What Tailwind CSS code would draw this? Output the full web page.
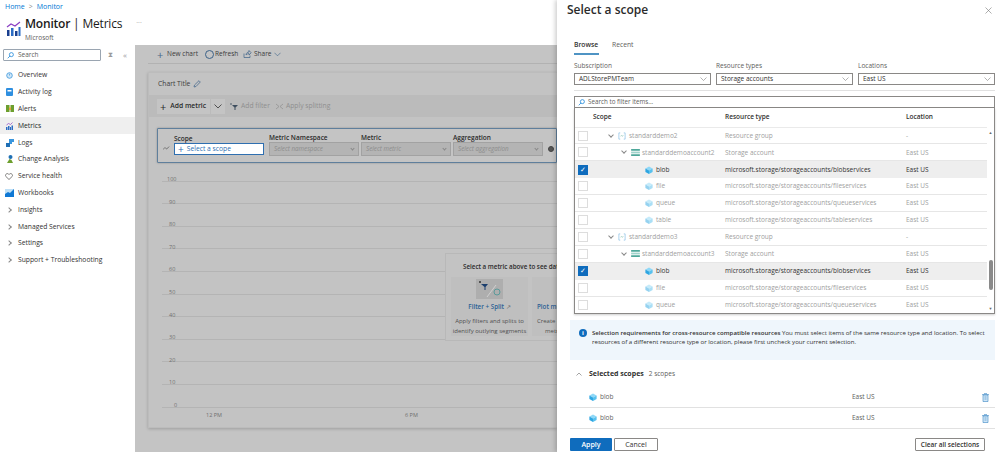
<!DOCTYPE html>
<html lang="en">
<head>
  <meta charset="UTF-8">
  <title>Monitor | Metrics</title>
  <script src="https://cdn.jsdelivr.net/npm/@tailwindcss/browser@4"></script>
</head>
<body class="bg-white overflow-hidden">
<svg class="hidden">
  <symbol id="cube" viewBox="0 0 10 10">
    <polygon points="5,0.5 9.5,3 5,5.5 0.5,3" fill="#8fd8f7"/>
    <polygon points="0.5,3 5,5.5 5,10 0.5,7.5" fill="#2ea6e2"/>
    <polygon points="9.5,3 5,5.5 5,10 9.5,7.5" fill="#58c1ee"/>
  </symbol>
  <symbol id="group" viewBox="0 0 9 9">
    <path d="M2.500 1H1v7h1.500M6.500 1H8v7H6.500" fill="none" stroke="#5aa7dd" stroke-width=".8"/>
    <path d="M3 5l1-1.500L5 5l1-1.500" fill="none" stroke="#6fb5a0" stroke-width=".7"/>
  </symbol>
  <symbol id="storage" viewBox="0 0 10 8">
    <rect width="10" height="2" fill="#4fa89a"/><rect y="3" width="10" height="2" fill="#9fd3cb"/><rect y="6" width="10" height="2" fill="#4fa89a"/>
  </symbol>
  <symbol id="trash" viewBox="0 0 7 9">
    <path d="M1 2h5v6.500H1zM0 1.500h7M2.500 1V.3h2V1M2.500 4h2M2.500 6h2" fill="#cfe6f7" stroke="#3a86c4" stroke-width=".6"/>
  </symbol>
  <symbol id="chev" viewBox="0 0 7 4">
    <path d="M.5.5l3 3 3-3" fill="none" stroke="#666" stroke-width=".5"/>
  </symbol>
</svg>
<div class="w-[998px] h-[452px] flex overflow-hidden font-['Open_Sans',sans-serif] text-[#323130]">

  <!-- left: portal behind the blade -->
  <div class="w-[557px] shrink-0 flex flex-col">
    <div class="h-[45px] shrink-0 pl-[5px] pt-[1px]">
      <div class="text-[7px] leading-[11px] text-[#0078d4] flex gap-[4px]"><span>Home</span><span class="text-[#888]">&gt;</span><span>Monitor</span></div>
      <div class="flex items-start mt-[3px]">
        <svg class="w-[15px] h-[16px] mt-[6px] ml-[1px]" viewBox="0 0 15 16">
          <path d="M1 6l4-3 4 2 5-4" fill="none" stroke="#8a3fc4" stroke-width="1.200"/>
          <rect x="1" y="9" width="2.500" height="6" fill="#1a3f8f"/><rect x="5" y="7" width="2.500" height="8" fill="#2b6cc4"/><rect x="9" y="10" width="2.500" height="5" fill="#1a3f8f"/><rect x="12.500" y="6" width="2" height="9" fill="#2b6cc4"/>
        </svg>
        <div class="ml-[4px]">
          <div class="text-[12px] leading-[17px] font-semibold text-[#1b1a19] whitespace-nowrap tracking-[-0.2px]">Monitor<span class="font-normal"> | Metrics</span></div>
          <div class="text-[6.5px] leading-[9px] mt-[1px] text-[#605e5c]">Microsoft</div>
        </div>
        <span class="ml-[14px] mt-[3px] text-[7px] text-[#999] leading-[10px]">···</span>
      </div>
    </div>

    <div class="flex flex-1 min-h-0">
      <!-- sidebar -->
      <div class="w-[135px] shrink-0">
        <div class="flex items-center h-[20px] pl-[3px]">
          <div class="w-[98px] h-[12px] border border-[#9aa5b1] rounded-[1px] flex items-center pl-[3px] gap-[4px] text-[6.5px] text-[#605e5c]">
            <svg class="w-[7px] h-[7px]" viewBox="0 0 8 8"><circle cx="5" cy="3" r="2.300" fill="none" stroke="#0078d4" stroke-width=".8"/><path d="M3.400 4.600L.8 7.200" stroke="#0078d4" stroke-width=".8"/></svg>
            Search
          </div>
          <span class="ml-[7px] text-[7px] text-[#999]">⧗</span>
          <span class="ml-[10px] text-[8px] text-[#999]">«</span>
        </div>
        <div class="text-[6.75px] text-[#323130] mt-[2px]">
          <div class="h-[16.8px] flex items-center pl-[6px] gap-[5px]"><svg class="w-[7px] h-[7px]" viewBox="0 0 8 8"><circle cx="4" cy="4" r="3.200" fill="#cfe6f7" stroke="#3a96dd" stroke-width=".9"/><path d="M4 4V2" stroke="#3a96dd" stroke-width=".8"/></svg><span>Overview</span></div>
          <div class="h-[16.8px] flex items-center pl-[6px] gap-[5px]"><svg class="w-[7px] h-[8px]" viewBox="0 0 7 8"><rect width="7" height="8" rx="1" fill="#2f8fe0"/><rect x="1.500" y="2" width="4" height="1.500" fill="#fff"/></svg><span>Activity log</span></div>
          <div class="h-[16.8px] flex items-center pl-[6px] gap-[4px]"><svg class="w-[8px] h-[7px]" viewBox="0 0 8 7"><path d="M0 0h3.500v7H0zM4.500 0H8v7H4.500z" fill="#6d9f2e"/><path d="M3 2.500h2V5H3z" fill="#e8a33d"/></svg><span>Alerts</span></div>
          <div class="h-[16.8px] flex items-center pl-[6px] gap-[5px] bg-[#efefef] text-[#201f1e]"><svg class="w-[7px] h-[8px]" viewBox="0 0 7 8"><path d="M.5 3l2-1.500 2 1L6.500.5" fill="none" stroke="#8a3fc4" stroke-width=".7"/><path d="M0 5h1.500v3H0zM2 4h1.500v4H2zM4 5h1v3H4zM5.500 3.500H7V8H5.500z" fill="#2b6cc4"/></svg><span>Metrics</span></div>
          <div class="h-[16.8px] flex items-center pl-[6px] gap-[4px]"><svg class="w-[8px] h-[8px]" viewBox="0 0 8 8"><path d="M3 0h5v3H6v2H3z" fill="#3a96dd"/><path d="M0 4h4v4H0z" fill="#1f6fb5"/></svg><span>Logs</span></div>
          <div class="h-[16.8px] flex items-center pl-[6px] gap-[4px]"><svg class="w-[8px] h-[8px]" viewBox="0 0 8 8"><circle cx="4.500" cy="2" r="2" fill="#1f6fb5"/><path d="M1 8l2.500-4 2 1L7 8z" fill="#6d9f2e"/></svg><span>Change Analysis</span></div>
          <div class="h-[16.8px] flex items-center pl-[5px] gap-[5px]"><svg class="w-[8px] h-[7px]" viewBox="0 0 8 7"><path d="M4 6.500L.7 3.300C-.5 1.500 2.700-.7 4 1.500 5.300-.7 8.500 1.500 7.300 3.300z" fill="none" stroke="#605e5c" stroke-width=".8"/></svg><span>Service health</span></div>
          <div class="h-[16.8px] flex items-center pl-[5px] gap-[4px]"><svg class="w-[9px] h-[8px]" viewBox="0 0 9 8"><rect width="9" height="8" fill="#bfe0f7"/><path d="M0 8V5l3-2 2 1 4-4v8z" fill="#0f78d4"/></svg><span>Workbooks</span></div>
          <div class="h-[16.8px] flex items-center pl-[7px] gap-[7px]"><span class="w-[4px] h-[4px] border-t border-r border-[#888] rotate-45"></span><span>Insights</span></div>
          <div class="h-[16.8px] flex items-center pl-[7px] gap-[7px]"><span class="w-[4px] h-[4px] border-t border-r border-[#888] rotate-45"></span><span>Managed Services</span></div>
          <div class="h-[16.8px] flex items-center pl-[7px] gap-[7px]"><span class="w-[4px] h-[4px] border-t border-r border-[#888] rotate-45"></span><span>Settings</span></div>
          <div class="h-[16.8px] flex items-center pl-[7px] gap-[7px]"><span class="w-[4px] h-[4px] border-t border-r border-[#888] rotate-45"></span><span class="whitespace-nowrap">Support + Troubleshooting</span></div>
        </div>
      </div>

      <!-- dimmed metrics page -->
      <div class="flex-1 min-w-0 bg-[#c4c4c4] flex flex-col pl-[13px] text-[#3b3b3b]">
        <div class="h-[19px] shrink-0 border-b border-[#b2b2b2] flex items-center pl-[9px] text-[6.5px] whitespace-nowrap">
          <span class="text-[11px] leading-none text-[#4a6a8a] w-[10px]">+</span><span class="w-[31px]">New chart</span>
          <span class="ml-[7px] w-[9px] h-[9px] rounded-full border border-[#3c6288]"></span><span class="ml-[1px] w-[23px]">Refresh</span>
          <svg class="w-[9px] h-[8px] ml-[5px]" viewBox="0 0 8 8"><path d="M.5 3.500v4h6v-2M2.500 5c0-2 1.500-3 3-3V.5L7.700 2.800 5.500 5V3.500c-1 0-2 .5-3 1.500z" fill="none" stroke="#3c6288" stroke-width=".7"/></svg><span class="ml-[2px] w-[18px]">Share</span>
          <svg class="w-[7px] h-[5px] ml-[2px]" viewBox="0 0 8 5"><path d="M.5.5L4 4 7.500.5" fill="none" stroke="#3c6288" stroke-width=".7"/></svg>
        </div>
        <div class="flex-1 mt-[8px] mb-[24px] bg-[#c3c3c3] border border-r-0 border-[#bcbcbc] shadow-[0_1px_3px_rgba(0,0,0,.2)] relative min-h-0">
          <div class="h-[22px] flex items-center pl-[9px] gap-[3px] text-[6.75px]">Chart Title
            <svg class="w-[8px] h-[8px]" viewBox="0 0 8 8"><path d="M1 7l.5-2L6 .7 7.300 2 3 6.500z" fill="none" stroke="#3c6288" stroke-width=".7"/></svg>
          </div>
          <div class="h-[22px] bg-[#bbbbbb] flex items-center pl-[8px] text-[6.75px]">
            <div class="h-[15px] w-[53px] bg-[#c4c4c4] flex items-center font-semibold text-[#2b2b2b] whitespace-nowrap">
              <span class="text-[11px] font-normal leading-none pl-[3px] pr-[4px]">+</span>Add metric
            </div>
            <div class="h-[15px] w-[14px] ml-[1px] bg-[#c4c4c4] flex items-center justify-center"><svg class="w-[8px] h-[5px]" viewBox="0 0 8 5"><path d="M.5.5L4 4 7.500.5" fill="none" stroke="#333" stroke-width=".8"/></svg></div>
            <span class="ml-[5px] text-[#8f8f8f] flex items-center gap-[3px] whitespace-nowrap"><svg class="w-[8px] h-[7px]" viewBox="0 0 8 7"><path d="M2 2h6L5.500 4.500V7h-1V4.500z" fill="#3f4f5f"/><circle cx="1" cy="1" r=".8" fill="#3f4f5f"/></svg>Add filter</span>
            <span class="ml-[6px] text-[#8f8f8f] flex items-center gap-[3px] whitespace-nowrap"><svg class="w-[7px] h-[7px]" viewBox="0 0 7 7"><path d="M0 1l3 2.500L0 6M7 1L4 3.500 7 6" fill="none" stroke="#8f8f8f" stroke-width=".7"/></svg>Apply splitting</span>
          </div>
          <!-- metric picker -->
          <div class="mt-[11px] ml-[8px] h-[35px] border border-[#5f7f9c] rounded-[1px] shadow-[0_0_2px_#888] flex items-end pb-[6px] pl-[5px] bg-[#c4c4c4]">
            <svg class="w-[7px] h-[4px] mb-[6px] mr-[4px]" viewBox="0 0 7 4"><path d="M0 3.500l2-2 1.500 1.500L6.500.5" fill="none" stroke="#333" stroke-dasharray="1 .5" stroke-width=".8"/></svg>
            <div class="w-[90px] mr-[5px]">
              <div class="text-[6.5px] leading-[9px] font-semibold text-[#2b2b2b]">Scope</div>
              <div class="h-[12px] mb-[1px] bg-white border border-[#2f6fb0] flex items-center pl-[3px] gap-[3px] text-[6.75px] text-[#2b6fb3]"><span class="text-[10px] leading-none">+</span>Select a scope</div>
            </div>
            <div class="w-[90px] mr-[2px]">
              <div class="text-[6.5px] leading-[9px] font-semibold text-[#2b2b2b]">Metric Namespace</div>
              <div class="h-[14px] bg-[#b4b4b4] border border-[#a2a2a2] flex items-center justify-between px-[4px] text-[6.25px] italic text-[#8c8c8c]">Select namespace<span class="w-[3px] h-[3px] border-b border-r border-[#888] rotate-45 -mt-[2px]"></span></div>
            </div>
            <div class="w-[90px] mr-[2px]">
              <div class="text-[6.5px] leading-[9px] font-semibold text-[#2b2b2b]">Metric</div>
              <div class="h-[14px] bg-[#b4b4b4] border border-[#a2a2a2] flex items-center justify-between px-[4px] text-[6.25px] italic text-[#8c8c8c]">Select metric<span class="w-[3px] h-[3px] border-b border-r border-[#888] rotate-45 -mt-[2px]"></span></div>
            </div>
            <div class="w-[90px] mr-[5px]">
              <div class="text-[6.5px] leading-[9px] font-semibold text-[#2b2b2b]">Aggregation</div>
              <div class="h-[14px] bg-[#b4b4b4] border border-[#a2a2a2] flex items-center justify-between px-[4px] text-[6.25px] italic text-[#8c8c8c]">Select aggregation<span class="w-[3px] h-[3px] border-b border-r border-[#888] rotate-45 -mt-[2px]"></span></div>
            </div>
            <span class="w-[6px] h-[6px] mb-[4px] rounded-full bg-[#555] border border-[#444]"></span>
          </div>
          <!-- chart grid -->
          <div class="ml-[13px] text-[5.5px] text-[#6f6f6f]">
            <div class="h-[18.7px] border-b border-[#b4b4b4] pl-[5px] leading-[7px] pt-[13px]">100</div>
            <div class="h-[22.6px] border-b border-[#b4b4b4] pl-[7px] leading-[7px] pt-[17px]">90</div>
            <div class="h-[22.6px] border-b border-[#b4b4b4] pl-[7px] leading-[7px] pt-[17px]">80</div>
            <div class="h-[22.6px] border-b border-[#b4b4b4] pl-[7px] leading-[7px] pt-[17px]">70</div>
            <div class="h-[22.6px] border-b border-[#b4b4b4] pl-[7px] leading-[7px] pt-[17px]">60</div>
            <div class="h-[22.6px] border-b border-[#b4b4b4] pl-[7px] leading-[7px] pt-[17px]">50</div>
            <div class="h-[22.6px] border-b border-[#b4b4b4] pl-[7px] leading-[7px] pt-[17px]">40</div>
            <div class="h-[22.6px] border-b border-[#b4b4b4] pl-[7px] leading-[7px] pt-[17px]">30</div>
            <div class="h-[22.6px] border-b border-[#b4b4b4] pl-[7px] leading-[7px] pt-[17px]">20</div>
            <div class="h-[22.6px] border-b border-[#b4b4b4] pl-[7px] leading-[7px] pt-[17px]">10</div>
            <div class="h-[22.6px] border-b border-[#b4b4b4] pl-[12px] leading-[7px] pt-[17px]">0</div>
            <div class="flex pl-[44px] pt-[3px] leading-[8px]"><span class="w-[199px]">12 PM</span><span>6 PM</span></div>
          </div>
          <!-- empty state card over the chart -->
          <div class="absolute left-[296px] top-[180px] w-[112px] h-[88px] bg-[#c3c3c3] border border-r-0 border-[#b8b8b8] pt-[8px] pl-[5px] overflow-hidden">
            <div class="text-[6.25px] font-semibold leading-[9px] whitespace-nowrap pl-[12px] text-[#2b2b2b]">Select a metric above to see data</div>
            <div class="flex gap-[4px] mt-[6px]">
              <div class="w-[77px] h-[59px] shrink-0 bg-[#bfbfbf] text-center">
                <svg class="w-[27px] h-[20px] mx-auto mt-[2px] bg-[#aeaeae]" viewBox="0 0 27 20"><path d="M5 5h7L9.500 8v3h-1V8z" fill="#1c3f6e"/><circle cx="4" cy="3" r="1" fill="#333"/><path d="M11 18L20 6" stroke="#d0d0d0"/><circle cx="21" cy="13" r="3" fill="none" stroke="#5a9a9a"/></svg>
                <div class="text-[6.25px] font-semibold leading-[9px] mt-[3px] text-[#2b5f94]">Filter + Split <span class="font-normal text-[#666]">↗</span></div>
                <div class="text-[6px] leading-[10px] mt-[5px] text-[#4f4f4f] whitespace-nowrap">Apply filters and splits to<br>identify outlying segments</div>
              </div>
              <div class="w-[78px] h-[59px] shrink-0 bg-[#bfbfbf] pt-[25px] pl-[5px] whitespace-nowrap">
                <div class="text-[6.25px] font-semibold leading-[9px] text-[#2b5f94]">Plot multiple</div>
                <div class="text-[6px] leading-[10px] mt-[5px] text-[#4f4f4f]">Create charts<br><span class="pl-[8px]">metrics</span></div>
              </div>
            </div>
          </div>
        </div>
      </div>
    </div>
  </div>

  <!-- right: Select a scope blade -->
  <div class="w-[441px] shrink-0 flex flex-col shadow-[-2px_0_4px_rgba(0,0,0,.18)] z-10 bg-white pl-[13px] pr-[3px]">
    <div class="h-[19px] flex justify-between items-center pr-[3px] pt-[1px]">
      <div class="text-[12px] font-semibold text-[#2b2b2b] -ml-[3px]">Select a scope</div>
      <svg class="w-[7px] h-[7px]" viewBox="0 0 7 7"><path d="M.5.5l6 6M6.500.5l-6 6" stroke="#777" stroke-width=".6"/></svg>
    </div>
    <div class="flex gap-[13px] text-[6.75px] leading-[14px] mt-[19px] h-[17px] pl-[4px] text-[#605e5c]">
      <div class="border-b-2 border-[#4f94c4] h-[17px] w-[25px] text-[#323130] font-semibold">Browse</div>
      <div>Recent</div>
    </div>
    <div class="flex gap-[5px] mt-[6px] ml-[4px] text-[6.5px] text-[#605e5c]">
      <div class="w-[137px]"><div class="leading-[10px]">Subscription</div><div class="mt-[2px] h-[12px] border border-[#8a8886] flex items-center justify-between pl-[4px] pr-[3px] text-[#323130]">ADLStorePMTeam<svg class="w-[7px] h-[4px]"><use href="#chev"/></svg></div></div>
      <div class="w-[137px]"><div class="leading-[10px]">Resource types</div><div class="mt-[2px] h-[12px] border border-[#8a8886] flex items-center justify-between pl-[4px] pr-[3px] text-[#323130]">Storage accounts<svg class="w-[7px] h-[4px]"><use href="#chev"/></svg></div></div>
      <div class="w-[137px]"><div class="leading-[10px]">Locations</div><div class="mt-[2px] h-[12px] border border-[#8a8886] flex items-center justify-between pl-[4px] pr-[3px] text-[#323130]">East US<svg class="w-[7px] h-[4px]"><use href="#chev"/></svg></div></div>
    </div>
    <div class="mt-[5px] ml-[4px] border-t border-[#e1e1e1]"></div>
    <div class="mt-[5px] ml-[4px] h-[12px] shrink-0 border border-[#8a8886] flex items-center pl-[3px] gap-[3px] text-[6.25px] text-[#605e5c]">
      <svg class="w-[7px] h-[7px]" viewBox="0 0 8 8"><circle cx="5" cy="3" r="2.300" fill="none" stroke="#0078d4" stroke-width=".8"/><path d="M3.400 4.600L.8 7.200" stroke="#0078d4" stroke-width=".8"/></svg>
      Search to filter items...
    </div>

    <!-- resource table -->
    <div class="ml-[4px] h-[206px] shrink-0 border border-t-0 border-[#8a8886] shadow-[0_1px_2px_rgba(0,0,0,.2)] flex">
      <div class="flex-1 min-w-0 text-[6.5px]">
        <div class="h-[19.6px] border-b border-[#eaeaea] flex items-center font-semibold text-[#323130]"><span class="w-[150px] pl-[18px]">Scope</span><span class="w-[181px]">Resource type</span><span>Location</span></div>
        <div class="h-[16.9px] border-b border-[#e6e6e6] flex items-center text-[#a0a0a0]"><span class="w-[150px] flex items-center pl-[3px]"><i class="w-[10px] h-[10px] border border-[#ddd] mr-[21px]"></i><span class="w-[4px] h-[4px] border-b border-r border-[#888] rotate-45 -mt-[2px] mr-[5px]"></span><svg class="w-[8px] h-[8px] mr-[3px] opacity-70"><use href="#group"/></svg>standarddemo2</span><span class="w-[181px]">Resource group</span><span>-</span></div>
        <div class="h-[16.9px] border-b border-[#e6e6e6] flex items-center text-[#a0a0a0]"><span class="w-[150px] flex items-center pl-[3px] whitespace-nowrap"><i class="w-[10px] h-[10px] border border-[#ddd] mr-[34px]"></i><span class="w-[4px] h-[4px] border-b border-r border-[#888] rotate-45 -mt-[2px] mr-[5px]"></span><svg class="w-[9px] h-[7px] mr-[2px]"><use href="#storage"/></svg>standarddemoaccount2</span><span class="w-[181px]">Storage account</span><span>East US</span></div>
        <div class="h-[16.9px] bg-[#eeeeee] flex items-center text-[#323130]"><span class="w-[150px] flex items-center pl-[3px]"><i class="w-[10px] h-[10px] bg-[#0f6cbd] text-white text-[7px] leading-[10px] not-italic text-center mr-[57px]">✓</i><svg class="w-[8px] h-[8px] mr-[3px]"><use href="#cube"/></svg>blob</span><span class="w-[181px]">microsoft.storage/storageaccounts/blobservices</span><span>East US</span></div>
        <div class="h-[16.9px] border-b border-[#e6e6e6] flex items-center text-[#a0a0a0]"><span class="w-[150px] flex items-center pl-[3px]"><i class="w-[10px] h-[10px] border border-[#ddd] mr-[57px]"></i><svg class="w-[8px] h-[8px] mr-[3px] opacity-50"><use href="#cube"/></svg>file</span><span class="w-[181px]">microsoft.storage/storageaccounts/fileservices</span><span>East US</span></div>
        <div class="h-[16.9px] border-b border-[#e6e6e6] flex items-center text-[#a0a0a0]"><span class="w-[150px] flex items-center pl-[3px]"><i class="w-[10px] h-[10px] border border-[#ddd] mr-[57px]"></i><svg class="w-[8px] h-[8px] mr-[3px] opacity-50"><use href="#cube"/></svg>queue</span><span class="w-[181px]">microsoft.storage/storageaccounts/queueservices</span><span>East US</span></div>
        <div class="h-[16.9px] border-b border-[#e6e6e6] flex items-center text-[#a0a0a0]"><span class="w-[150px] flex items-center pl-[3px]"><i class="w-[10px] h-[10px] border border-[#ddd] mr-[57px]"></i><svg class="w-[8px] h-[8px] mr-[3px] opacity-50"><use href="#cube"/></svg>table</span><span class="w-[181px]">microsoft.storage/storageaccounts/tableservices</span><span>East US</span></div>
        <div class="h-[16.9px] border-b border-[#e6e6e6] flex items-center text-[#a0a0a0]"><span class="w-[150px] flex items-center pl-[3px]"><i class="w-[10px] h-[10px] border border-[#ddd] mr-[21px]"></i><span class="w-[4px] h-[4px] border-b border-r border-[#888] rotate-45 -mt-[2px] mr-[5px]"></span><svg class="w-[8px] h-[8px] mr-[3px] opacity-70"><use href="#group"/></svg>standarddemo3</span><span class="w-[181px]">Resource group</span><span>-</span></div>
        <div class="h-[16.9px] border-b border-[#e6e6e6] flex items-center text-[#a0a0a0]"><span class="w-[150px] flex items-center pl-[3px] whitespace-nowrap"><i class="w-[10px] h-[10px] border border-[#ddd] mr-[34px]"></i><span class="w-[4px] h-[4px] border-b border-r border-[#888] rotate-45 -mt-[2px] mr-[5px]"></span><svg class="w-[9px] h-[7px] mr-[2px]"><use href="#storage"/></svg>standarddemoaccount3</span><span class="w-[181px]">Storage account</span><span>East US</span></div>
        <div class="h-[16.9px] bg-[#eeeeee] flex items-center text-[#323130]"><span class="w-[150px] flex items-center pl-[3px]"><i class="w-[10px] h-[10px] bg-[#0f6cbd] text-white text-[7px] leading-[10px] not-italic text-center mr-[57px]">✓</i><svg class="w-[8px] h-[8px] mr-[3px]"><use href="#cube"/></svg>blob</span><span class="w-[181px]">microsoft.storage/storageaccounts/blobservices</span><span>East US</span></div>
        <div class="h-[16.9px] border-b border-[#e6e6e6] flex items-center text-[#a0a0a0]"><span class="w-[150px] flex items-center pl-[3px]"><i class="w-[10px] h-[10px] border border-[#ddd] mr-[57px]"></i><svg class="w-[8px] h-[8px] mr-[3px] opacity-50"><use href="#cube"/></svg>file</span><span class="w-[181px]">microsoft.storage/storageaccounts/fileservices</span><span>East US</span></div>
        <div class="h-[16.9px] flex items-center text-[#a0a0a0]"><span class="w-[150px] flex items-center pl-[3px]"><i class="w-[10px] h-[10px] border border-[#ddd] mr-[57px]"></i><svg class="w-[8px] h-[8px] mr-[3px] opacity-50"><use href="#cube"/></svg>queue</span><span class="w-[181px]">microsoft.storage/storageaccounts/queueservices</span><span>East US</span></div>
      </div>
      <!-- scrollbar -->
      <div class="w-[7px] shrink-0 flex flex-col items-center justify-end pb-[2px] pt-[22px] text-[4px] text-[#666] leading-[5px]">
        <span class="mb-auto">▲</span>
        <div class="w-[4px] h-[30px] rounded-full bg-[#8a8a8a] mb-[16px]"></div>
        <span>▼</span>
      </div>
    </div>

    <!-- info box -->
    <div class="mt-[6px] h-[40px] shrink-0 bg-[#eff6fc] flex pl-[9px] pt-[9px] text-[6.1px] leading-[8.5px] text-[#323130]">
      <span class="w-[8px] h-[8px] shrink-0 rounded-full bg-[#0f6cbd] text-white text-center text-[6px] leading-[8px] font-bold mr-[5px]">i</span>
      <div class="pr-[10px]"><span class="font-semibold">Selection requirements for cross-resource compatible resources</span> You must select items of the same resource type and location. To select resources of a different resource type or location, please first uncheck your current selection.</div>
    </div>

    <div class="mt-[9px] h-[10px] flex items-center text-[7px] pl-[6px]">
      <svg class="w-[6px] h-[4px] mr-[7px]" viewBox="0 0 6 4"><path d="M.5 3.500L3 1l2.500 2.500" fill="none" stroke="#666" stroke-width=".6"/></svg>
      <span class="font-bold mr-[5px]">Selected scopes</span><span class="text-[#605e5c] text-[6.5px]">2 scopes</span>
    </div>
    <div class="mt-[8px] text-[6.5px] text-[#605e5c]">
      <div class="h-[21px] border-b border-[#e1e1e1] flex items-center pl-[19px]"><svg class="w-[8px] h-[8px] mr-[3px]"><use href="#cube"/></svg><span class="w-[252px]">blob</span><span class="flex-1">East US</span>
        <svg class="w-[7px] h-[9px] mr-[6px]"><use href="#trash"/></svg></div>
      <div class="h-[21px] border-b border-[#e1e1e1] flex items-center pl-[19px]"><svg class="w-[8px] h-[8px] mr-[3px]"><use href="#cube"/></svg><span class="w-[252px]">blob</span><span class="flex-1">East US</span>
        <svg class="w-[7px] h-[9px] mr-[6px]"><use href="#trash"/></svg></div>
    </div>
    <div class="mt-[9px] flex text-[7px]">
      <div class="w-[42px] h-[13px] bg-[#0f6cbd] text-white font-semibold text-center leading-[13px] rounded-[1px]">Apply</div>
      <div class="w-[44px] h-[13px] ml-[2px] border border-[#8a8886] text-center leading-[11px] rounded-[1px]">Cancel</div>
      <div class="w-[70px] h-[13px] ml-auto mr-[10px] border border-[#8a8886] text-center leading-[11px] text-[6.5px] font-semibold rounded-[1px]">Clear all selections</div>
    </div>
  </div>
</div>
</body>
</html>
